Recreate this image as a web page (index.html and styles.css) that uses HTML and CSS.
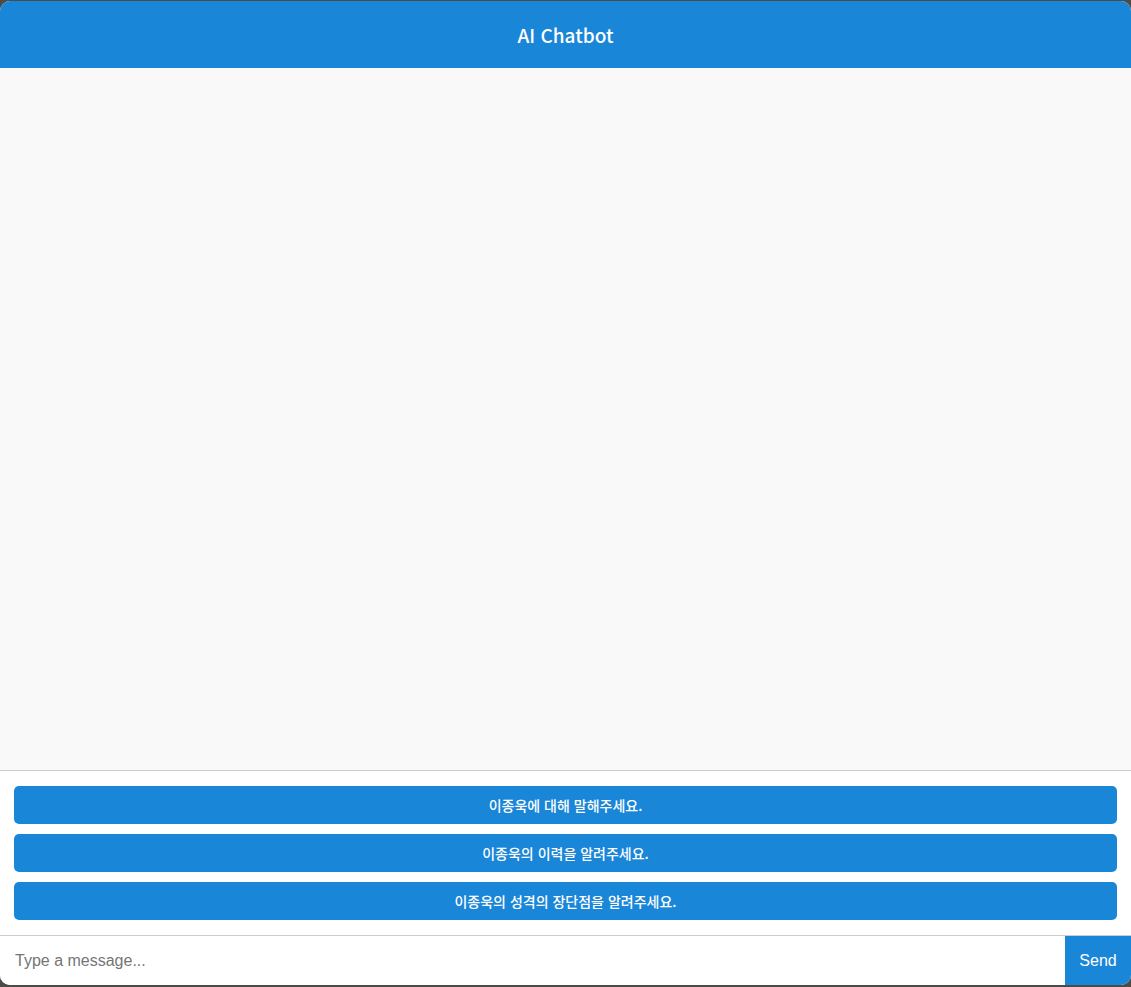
FILE: index.html
```html
<!DOCTYPE html>
<html lang="ko">
<head>
    <meta charset="UTF-8">
    <meta name="viewport" content="width=device-width, initial-scale=1.0">
    <title>AI Chatbot</title>
    <link rel="stylesheet" href="styles.css">
</head>
<body>
    <div class="chat-container">
        <div class="chat-header">AI Chatbot</div>
        <div class="chat-messages" id="messages"></div>
        <div class="suggestions">
            <button class="suggestion">이종욱에 대해 말해주세요.</button>
            <button class="suggestion">이종욱의 이력을 알려주세요.</button>
            <button class="suggestion">이종욱의 성격의 장단점을 알려주세요.</button>
        </div>
        <div class="chat-input">
            <input type="text" id="userInput" placeholder="Type a message...">
            <button class="send" id="sendBtn">Send</button>
        </div>
    </div>
</body>
</html>
```

FILE: styles.css
```css
body {
    margin: 0;
    padding-top: 1px;
    background: #4b4b48;
    font-family: "Noto Sans CJK KR", "Noto Sans", sans-serif;
    height: 986px;
    overflow: hidden;
}
.chat-container {
    height: 984px;
    display: flex;
    flex-direction: column;
    background-color: #fff;
    border-radius: 10px;
    overflow: hidden;
}
.chat-header {
    height: 67px;
    display: flex;
    align-items: center;
    justify-content: center;
    background-color: #1a86d8;
    color: #fff;
    font-size: 19px;
    font-weight: 500;
}
.chat-messages {
    flex: 1;
    background-color: #f9f9f9;
    border-bottom: 1px solid #ccc;
}
.suggestions {
    display: flex;
    flex-direction: column;
    gap: 10px;
    padding: 15px 14px 15px;
    border-bottom: 1px solid #ccc;
}
.suggestion {
    height: 38px;
    border: none;
    border-radius: 5px;
    background-color: #1a86d8;
    color: #fff;
    font-family: "Noto Sans CJK KR", sans-serif;
    font-size: 14px;
    font-weight: 500;
    cursor: pointer;
}
.chat-input {
    display: flex;
    height: 49px;
}
.chat-input input {
    flex: 1;
    border: none;
    outline: none;
    padding: 0 15px;
    font-family: "Liberation Sans", Arial, sans-serif;
    font-size: 16px;
    color: #333;
}
.chat-input input::placeholder {
    color: #757575;
}
.send {
    width: 66px;
    border: none;
    background-color: #1a86d8;
    color: #fff;
    font-family: "Liberation Sans", Arial, sans-serif;
    font-size: 16px;
    cursor: pointer;
}
```
